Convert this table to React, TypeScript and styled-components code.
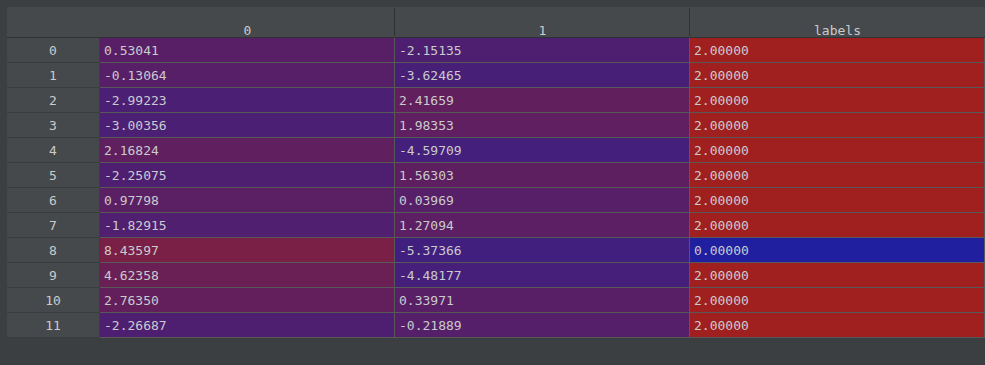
import React from 'react';
import styled, { createGlobalStyle } from 'styled-components';

const GlobalStyle = createGlobalStyle`
  html, body {
    margin: 0;
    padding: 0;
    background: #3c3f41;
  }
`;

const columns = ['0', '1', 'labels'];

const rows: number[][] = [
  [0.53041, -2.15135, 2],
  [-0.13064, -3.62465, 2],
  [-2.99223, 2.41659, 2],
  [-3.00356, 1.98353, 2],
  [2.16824, -4.59709, 2],
  [-2.25075, 1.56303, 2],
  [0.97798, 0.03969, 2],
  [-1.82915, 1.27094, 2],
  [8.43597, -5.37366, 0],
  [4.62358, -4.48177, 2],
  [2.7635, 0.33971, 2],
  [-2.26687, -0.21889, 2],
];

const mix = (t: number) => {
  const c = Math.max(0, Math.min(1, t));
  const r = Math.round(31 + c * 129);
  const b = Math.round(160 - c * 129);
  return `rgb(${r}, 31, ${b})`;
};

// numeric columns share one scale, labels scale on their own 0..2
const cellColor = (value: number, col: number) =>
  col === 2 ? mix(value / 2) : mix(0.436 + 0.032 * value);

const App: React.FC = () => {
  return (
    <>
      <GlobalStyle />
      <Page>
        <Table>
          <HeaderCell $divider={false} />
          {columns.map((name, i) => (
            <HeaderCell key={name} $divider={i < columns.length - 1}>
              {name}
            </HeaderCell>
          ))}
          {rows.map((row, r) => (
            <React.Fragment key={r}>
              <IndexCell>{r}</IndexCell>
              {row.map((value, c) => (
                <DataCell key={c} $bg={cellColor(value, c)}>
                  {value.toFixed(5)}
                </DataCell>
              ))}
            </React.Fragment>
          ))}
        </Table>
      </Page>
    </>
  );
};

export default App;

const Page = styled.div`
  width: 985px;
  height: 365px;
  padding: 7px 0 0 7px;
  box-sizing: border-box;
  background: #3c3f41;
  font-family: "DejaVu Sans Mono", "Liberation Mono", monospace;
  font-size: 13px;
  color: #c9cbcd;
  overflow: hidden;
`;

const Table = styled.div`
  display: grid;
  grid-template-columns: 93px 295px 295px 295px;
  grid-auto-rows: 25px;
  grid-template-rows: 31px;
`;

const HeaderCell = styled.div<{ $divider: boolean }>`
  background: #45494b;
  border-bottom: 1px solid #2f3234;
  display: flex;
  align-items: flex-end;
  justify-content: center;
  line-height: 13px;
  padding-bottom: 0;
  position: relative;

  &::after {
    content: '';
    display: ${({ $divider }) => ($divider ? 'block' : 'none')};
    position: absolute;
    right: 0;
    top: 1px;
    bottom: 1px;
    width: 1px;
    background: #2f3234;
  }
`;

const IndexCell = styled.div`
  background: #45494b;
  border-bottom: 1px solid #3a3d3f;
  border-right: 1px solid #3a3d3f;
  display: flex;
  align-items: center;
  justify-content: center;
`;

const DataCell = styled.div<{ $bg: string }>`
  background: ${({ $bg }) => $bg};
  border-bottom: 1px solid #585858;
  border-right: 1px solid #585858;
  display: flex;
  align-items: center;
  padding-left: 4px;
`;
